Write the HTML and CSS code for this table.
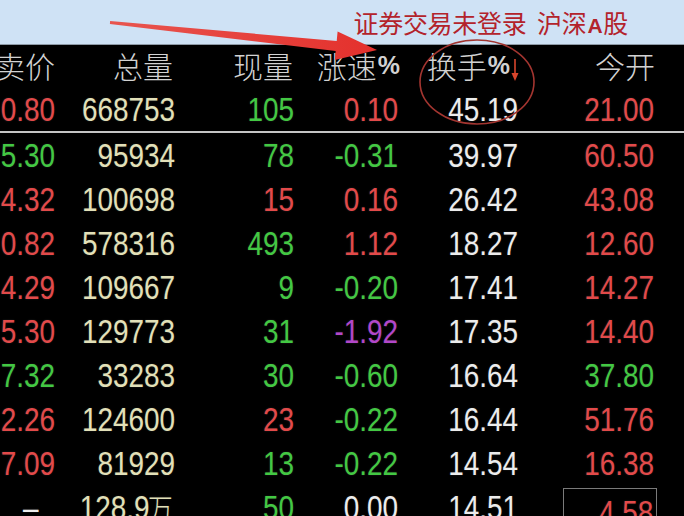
FILE: index.html
```html
<!DOCTYPE html>
<html lang="zh">
<head>
<meta charset="utf-8">
<title>行情</title>
<link rel="stylesheet" href="styles.css">
</head>
<body>
<div class="screen">
  <div class="topbar"><span class="title">证券交易未登录&nbsp; 沪深<b class="a">A</b>股</span></div>
  <div class="grid head">
    <div class="h">卖价</div>
    <div class="h h2">总量</div>
    <div class="h h3">现量</div>
    <div class="h h4">涨速<span class="pct">%</span></div>
    <div class="h h5">换手<span class="pct">%</span><svg class="sort" width="10" height="26" viewBox="0 0 10 26"><path d="M5 2 V22" stroke="#d8452c" stroke-width="1.6"/><path d="M1.5 16 L5 24 L8.5 16 Z" fill="#d8452c"/></svg></div>
    <div class="h h6">今开</div>
    <div></div>
  </div>
  <div class="grid row">
    <div class="r">0.80</div><div class="y">668753</div><div class="g">105</div><div class="r">0.10</div><div class="w">45.19</div><div class="r">21.00</div><div></div>
  </div>
  <div class="sep"></div>
  <div class="grid row">
    <div class="g">5.30</div><div class="y">95934</div><div class="g">78</div><div class="g">-0.31</div><div class="w">39.97</div><div class="r">60.50</div><div></div>
  </div>
  <div class="grid row">
    <div class="r">4.32</div><div class="y">100698</div><div class="r">15</div><div class="r">0.16</div><div class="w">26.42</div><div class="r">43.08</div><div></div>
  </div>
  <div class="grid row">
    <div class="r">0.82</div><div class="y">578316</div><div class="g">493</div><div class="r">1.12</div><div class="w">18.27</div><div class="r">12.60</div><div></div>
  </div>
  <div class="grid row">
    <div class="r">4.29</div><div class="y">109667</div><div class="g">9</div><div class="g">-0.20</div><div class="w">17.41</div><div class="r">14.27</div><div></div>
  </div>
  <div class="grid row">
    <div class="r">5.30</div><div class="y">129773</div><div class="g">31</div><div class="p">-1.92</div><div class="w">17.35</div><div class="r">14.40</div><div></div>
  </div>
  <div class="grid row">
    <div class="g">7.32</div><div class="y">33283</div><div class="g">30</div><div class="g">-0.60</div><div class="w">16.64</div><div class="g">37.80</div><div></div>
  </div>
  <div class="grid row">
    <div class="r">2.26</div><div class="y">124600</div><div class="r">23</div><div class="g">-0.22</div><div class="w">16.44</div><div class="r">51.76</div><div></div>
  </div>
  <div class="grid row">
    <div class="r">7.09</div><div class="y">81929</div><div class="g">13</div><div class="g">-0.22</div><div class="w">14.54</div><div class="r">16.38</div><div></div>
  </div>
  <div class="grid row">
    <div class="w dash">–</div><div class="y wanc">128.9<span class="wan">万</span></div><div class="g">50</div><div class="w">0.00</div><div class="w">14.51</div><div class="boxed"><span class="box r"><span class="sq">4.58</span></span></div><div></div>
  </div>

  <svg class="overlay" width="684" height="516" viewBox="0 0 684 516">
    <defs>
      <linearGradient id="ag" x1="0" y1="0" x2="1" y2="0">
        <stop offset="0" stop-color="#e8554f"/>
        <stop offset="1" stop-color="#e4302c"/>
      </linearGradient>
    </defs>
    <ellipse cx="477" cy="82" rx="57" ry="42" fill="none" stroke="#a33530" stroke-width="1.6"/>
    <polygon points="110.1,21 336.7,40.9 337.6,31.5 377,50 334.8,60 335.7,50.9 109.9,24" fill="url(#ag)"/>
  </svg>
</div>
</body>
</html>
```

FILE: styles.css
```css
html, body {
  margin: 0;
  padding: 0;
  background: #000;
}
.screen {
  position: relative;
  width: 684px;
  height: 516px;
  overflow: hidden;
  background: #000;
}
.topbar {
  height: 45px;
  background: #cfe2f5;
  border-bottom: 1px solid #8e9aa6;
  display: flex;
  justify-content: flex-end;
  align-items: center;
  padding-right: 56px;
  box-sizing: border-box;
}
.title {
  font-family: "Noto Sans CJK SC", sans-serif;
  font-size: 25px;
  color: #b3232b;
  line-height: 1;
  padding-top: 2px;
  letter-spacing: -0.3px;
}
.title .a {
  font-family: "Liberation Sans", sans-serif;
  font-weight: bold;
  font-size: 21px;
  margin: 0 1px;
}
.grid {
  display: grid;
  grid-template-columns: 55px 120px 119px 104px 120px 136px 30px;
}
.head {
  height: 42px;
  align-items: center;
}
.h {
  font-family: "Noto Sans CJK SC", sans-serif;
  font-weight: 300;
  font-size: 30px;
  color: #d2d2d2;
  line-height: 1;
  white-space: nowrap;
  display: flex;
  justify-content: flex-end;
  align-items: center;
  padding-bottom: 2px;
}
.h2 { padding-right: 2px; }
.h3 { padding-right: 1px; }
.h4 { margin-right: -2px; }
.h5 { margin-right: -2px; }
.h6 { margin-right: -1px; }
.pct {
  font-family: "Liberation Sans", sans-serif;
  font-weight: bold;
  font-size: 25px;
  margin-left: 1px;
}
.sort {
  align-self: center;
  margin-top: 10px;
}
.row {
  height: 44px;
  align-items: center;
}
.row > div {
  display: flex;
  justify-content: flex-end;
  align-items: center;
  font-family: "Liberation Sans", sans-serif;
  font-size: 34px;
  line-height: 1;
  white-space: nowrap;
  transform: scaleX(0.82);
  transform-origin: right center;
  text-shadow: 0 0 2px rgba(255,255,255,0.15);
}
.sep {
  height: 2px;
  background: #c4c4c4;
}
.r { color: #e24a4a; }
.g { color: #43c843; }
.y { color: #e2e0b8; }
.w { color: #ececec; }
.p { color: #b247c9; }
.row > .dash {
  padding-right: 20px;
}
.row > .wanc {
  padding-right: 3px;
}
.wan {
  font-family: "Noto Sans CJK SC", sans-serif;
  font-size: 30px;
  font-weight: 300;
  margin-left: -2px;
}
.row > .boxed {
  align-self: end;
  transform: none;
  margin-right: -3px;
}
.box {
  display: flex;
  justify-content: flex-end;
  align-items: flex-start;
  box-sizing: border-box;
  width: 94px;
  height: 41px;
  border: 1px solid #7a7a7a;
  border-bottom: none;
  padding: 6px 3px 0 0;
}
.sq {
  display: inline-block;
  transform: scaleX(0.82);
  transform-origin: right center;
}
.overlay {
  position: absolute;
  left: 0;
  top: 0;
  pointer-events: none;
}
```
